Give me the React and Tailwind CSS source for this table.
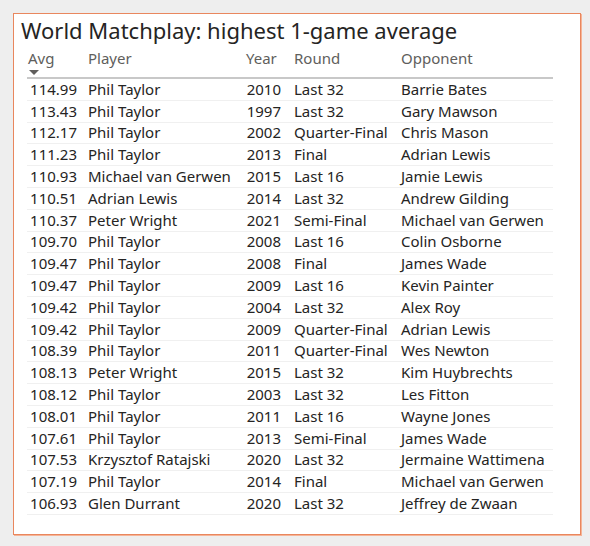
import React from "react";

const rows = [
  ["114.99", "Phil Taylor", "2010", "Last 32", "Barrie Bates"],
  ["113.43", "Phil Taylor", "1997", "Last 32", "Gary Mawson"],
  ["112.17", "Phil Taylor", "2002", "Quarter-Final", "Chris Mason"],
  ["111.23", "Phil Taylor", "2013", "Final", "Adrian Lewis"],
  ["110.93", "Michael van Gerwen", "2015", "Last 16", "Jamie Lewis"],
  ["110.51", "Adrian Lewis", "2014", "Last 32", "Andrew Gilding"],
  ["110.37", "Peter Wright", "2021", "Semi-Final", "Michael van Gerwen"],
  ["109.70", "Phil Taylor", "2008", "Last 16", "Colin Osborne"],
  ["109.47", "Phil Taylor", "2008", "Final", "James Wade"],
  ["109.47", "Phil Taylor", "2009", "Last 16", "Kevin Painter"],
  ["109.42", "Phil Taylor", "2004", "Last 32", "Alex Roy"],
  ["109.42", "Phil Taylor", "2009", "Quarter-Final", "Adrian Lewis"],
  ["108.39", "Phil Taylor", "2011", "Quarter-Final", "Wes Newton"],
  ["108.13", "Peter Wright", "2015", "Last 32", "Kim Huybrechts"],
  ["108.12", "Phil Taylor", "2003", "Last 32", "Les Fitton"],
  ["108.01", "Phil Taylor", "2011", "Last 16", "Wayne Jones"],
  ["107.61", "Phil Taylor", "2013", "Semi-Final", "James Wade"],
  ["107.53", "Krzysztof Ratajski", "2020", "Last 32", "Jermaine Wattimena"],
  ["107.19", "Phil Taylor", "2014", "Final", "Michael van Gerwen"],
  ["106.93", "Glen Durrant", "2020", "Last 32", "Jeffrey de Zwaan"],
];

export default function App() {
  return (
    <div className="w-[590px] h-[546px] bg-[#eeeeee] pt-[13px] pl-[13px]" style={{ fontFamily: '"Noto Sans", sans-serif' }}>
      <div className="w-[568px] h-[522px] bg-white border border-[#e9875e] shadow-[1px_1px_0_#f5b497]">
        <div className="pl-[7px] pt-[1px] text-[22px] leading-[30px] text-[#252423]">
          World Matchplay: highest 1-game average
        </div>
        <div className="ml-[13px] w-[526px] text-[15px] text-[#252423]">
          <div className="flex h-[34px] border-b-2 border-[#c8c8c8] text-[#605e5c] relative">
            <div className="w-[55px] pl-[1px] pt-[2px]">Avg</div>
            <div className="w-[160px] pl-[6px] pt-[2px]">Player</div>
            <div className="w-[45px] pl-[4px] pt-[2px]">Year</div>
            <div className="w-[108px] pl-[7px] pt-[2px]">Round</div>
            <div className="flex-1 pl-[6px] pt-[2px]">Opponent</div>
            <svg className="absolute left-[2px] top-[25px]" width="10" height="5" viewBox="0 0 10 5">
              <path d="M0 0 L10 0 L5 5 Z" fill="#605e5c" />
            </svg>
          </div>
          {rows.map((r, i) => (
            <div key={i} className="flex h-[21.8px] items-center border-b border-[#f0f0f0] leading-none">
              <div className="w-[55px] pr-[5px] text-right">{r[0]}</div>
              <div className="w-[160px] pl-[6px]">{r[1]}</div>
              <div className="w-[45px] pr-[6px] text-right">{r[2]}</div>
              <div className="w-[108px] pl-[7px]">{r[3]}</div>
              <div className="flex-1 pl-[6px]">{r[4]}</div>
            </div>
          ))}
        </div>
      </div>
    </div>
  );
}
